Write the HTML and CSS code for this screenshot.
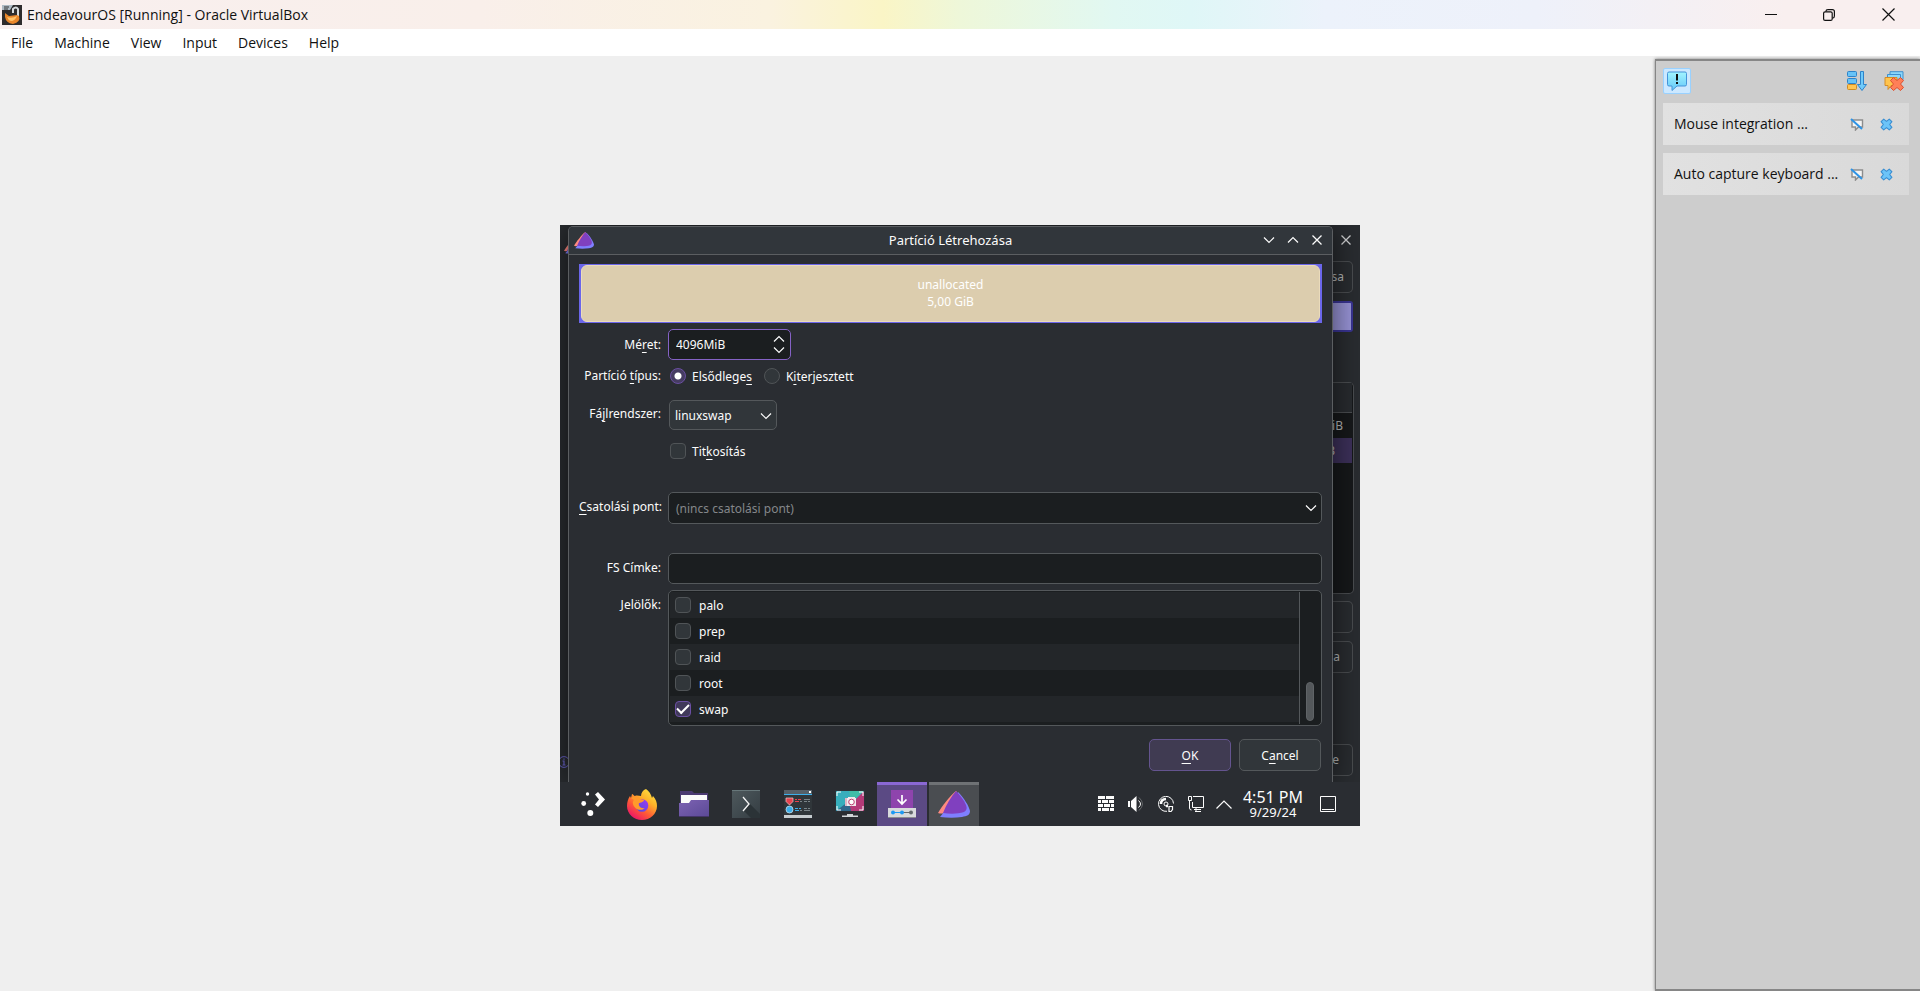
FILE: index.html
```html
<!DOCTYPE html>
<html lang="en">
<head>
<meta charset="utf-8">
<title>EndeavourOS [Running] - Oracle VirtualBox</title>
<link rel="stylesheet" href="styles.css">
</head>
<body>
<svg class="defs" aria-hidden="true">
  <symbol id="logo" viewBox="0 0 32 27">
    <path d="M18 0C12 5 4 15 0 22q3 1 6 0L19 1z" fill="#ff8a80"/>
    <path d="M20 1c6 6 11 14 12 19 0 4-3 5-8 6-7 1-14 1-22 0l4-5z" fill="#7f7fff"/>
    <path d="M18 0C13 6 8 14 5 22c7 1 15 1 21-1 3-2 3-4 2-7-2-5-6-10-10-14z" fill="#8040bf"/>
  </symbol>
  <symbol id="chev" viewBox="0 0 12 8"><path d="M1 1.500l5 5 5-5" fill="none" stroke="currentColor" stroke-width="1.200"/></symbol>
  <symbol id="cross" viewBox="0 0 12 12"><path d="M1.500 1.500l9 9m0-9l-9 9" fill="none" stroke="currentColor" stroke-width="1.300"/></symbol>
  <symbol id="hide" viewBox="0 0 14 13">
    <path d="M2 2h10.500v7H8.500l-3 3V9H2z" fill="#f4f4f4" stroke="#8d8d8d" stroke-width="1.400"/>
    <path d="M1 1l11 10" stroke="#2d93e6" stroke-width="2"/>
  </symbol>
  <symbol id="bluex" viewBox="0 0 14 14">
    <path d="M4 1.200L7 3.700l3-2.500 2.800 2.800L10.400 7l2.400 3-2.800 2.800-3-2.400-3 2.400L1.200 10l2.400-3L1.200 4z" fill="#6cc4f8" stroke="#3b8fd2" stroke-width="1.200" stroke-linejoin="round"/>
  </symbol>
</svg>

<header class="titlebar">
  <svg class="app-icon" viewBox="0 0 20 20">
    <rect width="20" height="20" fill="#2e2c2d"/><path d="M0 0h11L8 5H0z" fill="#aebac4"/><path d="M2 2h5M2 4h4" stroke="#333" stroke-width="1"/>
    <path d="M11 8V4q3-3 5 0v7" stroke="#d7dbde" stroke-width="2" fill="none"/>
    <path d="M3 8l4 3 8-1 2 1q2 6-6 8-7-1-8-7z" fill="#e9862a"/><path d="M5 12q5 2 10-1-2 5-6 5-3-1-4-4z" fill="#ffc36a"/>
  </svg>
  <h1 class="app-title">EndeavourOS [Running] - Oracle VirtualBox</h1>
  <div class="winctl">
    <button aria-label="Minimize"><svg width="12" height="12" viewBox="0 0 12 12"><path d="M0 5.500h12" stroke="#111"/></svg></button>
    <button aria-label="Restore"><svg width="12" height="12" viewBox="0 0 12 12" fill="none" stroke="#111" stroke-width="1.200"><rect x=".6" y="2.800" width="8.600" height="8.600" rx="1.500"/><path d="M2.800 2.500Q3 .6 5 .6h4.400q2 0 2 2V7q0 2-2 2.200"/></svg></button>
    <button aria-label="Close"><svg width="13" height="13" viewBox="0 0 13 13"><path d="M.5.5l12 12m0-12l-12 12" stroke="#111" stroke-width="1.200"/></svg></button>
  </div>
</header>
<nav class="menubar">
  <button>File</button><button>Machine</button><button>View</button><button>Input</button><button>Devices</button><button>Help</button>
</nav>

<main class="workspace">
  <section class="screen" aria-label="Virtual machine display">
    <div class="back-window">
      <div class="back-left">
        <svg class="back-logo"><use href="#logo"/></svg>
        <svg class="back-info" viewBox="0 0 12 12"><circle cx="6" cy="6" r="5.400" fill="none" stroke="#6862c8"/><path d="M4.500 5H6v4M4.500 9h3M6 2.500v1.200" stroke="#6862c8" stroke-width="1.200" fill="none"/></svg>
      </div>
      <div class="back-right">
        <button class="back-close" aria-label="Close"><svg width="12" height="12"><use href="#cross"/></svg></button>
        <button class="back-btn first">sa</button>
        <div class="back-bar"></div>
        <div class="back-table"><div class="bt-head"></div><div class="bt-row">iB</div><div class="bt-row on">B</div></div>
        <button class="back-btn" aria-label="Action"></button>
        <button class="back-btn second">a</button>
        <button class="back-btn third">e</button>
      </div>
    </div>

    <form class="dialog">
      <div class="dialog-title">
        <svg class="dlg-logo"><use href="#logo"/></svg>
        <h2>Partíció Létrehozása</h2>
        <div class="dlg-ctl">
          <button type="button" aria-label="Minimize"><svg width="12" height="8"><use href="#chev"/></svg></button>
          <button type="button" aria-label="Maximize"><svg class="flip" width="12" height="8"><use href="#chev"/></svg></button>
          <button type="button" aria-label="Close"><svg width="12" height="12"><use href="#cross"/></svg></button>
        </div>
      </div>
      <div class="dialog-body">
        <div class="part-frame"><div class="part"><span>unallocated</span><span>5,00 GiB</span></div></div>
        <div class="grid">
          <label class="lab" for="size">Mé<u>r</u>et:</label>
          <div class="spin"><input id="size" type="text" value="4096MiB">
            <div class="spin-btns"><button type="button" aria-label="Increase"><svg class="flip" width="12" height="8"><use href="#chev"/></svg></button><button type="button" aria-label="Decrease"><svg width="12" height="8"><use href="#chev"/></svg></button></div>
          </div>

          <span class="lab" id="ptype">Partíció <u>t</u>ípus:</span>
          <div class="radios" role="radiogroup" aria-labelledby="ptype">
            <label><input type="radio" name="type" checked><span>Elsődlege<u>s</u></span></label>
            <label><input type="radio" name="type"><span>K<u>i</u>terjesztett</span></label>
          </div>

          <label class="lab fs" for="fs">Fá<u>j</u>lrendszer:</label>
          <div class="drop small"><select id="fs"><option>linuxswap</option></select><svg width="12" height="8"><use href="#chev"/></svg></div>

          <label class="check crypt"><input type="checkbox"><span>Tit<u>k</u>osítás</span></label>

          <label class="lab up" for="mount"><u>C</u>satolási pont:</label>
          <div class="drop wide"><select id="mount"><option>(nincs csatolási pont)</option></select><svg width="12" height="8"><use href="#chev"/></svg></div>

          <label class="lab up" for="fslabel">FS Címke:</label>
          <input class="text" id="fslabel" type="text">

          <span class="lab top" id="flags">Jelölők:</span>
          <div class="list" role="group" aria-labelledby="flags">
            <div class="rows">
              <label class="check"><input type="checkbox"><span>palo</span></label>
              <label class="check"><input type="checkbox"><span>prep</span></label>
              <label class="check"><input type="checkbox"><span>raid</span></label>
              <label class="check"><input type="checkbox"><span>root</span></label>
              <label class="check"><input type="checkbox" checked><span>swap</span></label>
            </div>
            <div class="scroll"><div class="thumb"></div></div>
          </div>
        </div>
        <div class="actions"><button type="button" class="btn primary"><u>O</u>K</button><button type="button" class="btn">C<u>a</u>ncel</button></div>
      </div>
    </form>

    <footer class="taskbar">
      <button class="launcher" aria-label="Application launcher"><svg width="24" height="26" viewBox="0 0 24 26" fill="#fff"><path d="M14 3.500L17 1l7 7.500-7 7.500-3-2.500 4-5z"/><circle cx="6.500" cy="3" r="1.700"/><circle cx="2.700" cy="12.500" r="2.400"/><circle cx="9.300" cy="22" r="3"/></svg></button>
      <button class="task" aria-label="Firefox"><svg width="30" height="31" viewBox="0 0 30 31">
        <defs><linearGradient id="ff" x1="1" y1="0" x2=".3" y2="1"><stop offset="0" stop-color="#fff04a"/><stop offset=".4" stop-color="#ffb329"/><stop offset=".7" stop-color="#ff5a36"/><stop offset="1" stop-color="#ec1667"/></linearGradient>
        <linearGradient id="fg" x1="1" y1="0" x2="0" y2="1"><stop offset="0" stop-color="#a03bf0"/><stop offset="1" stop-color="#4c4ce0"/></linearGradient></defs>
        <path d="M19 0c3 2 5 5 6 9l1-2c3 3 4 7 4 10 0 8-7 14-15 14S0 25 0 17c0-4 1-7 3-10l1 2 1-4c1 0 2 2 3 2 2-1 4 0 6 0 0-3 2-6 5-7z" fill="url(#ff)"/>
        <circle cx="15" cy="16.500" r="6.300" fill="url(#fg)"/>
        <path d="M4 9c4-3 7-2 9 1l4 1c0 2-4 3-5 3-1 3 2 6 6 5-4 4-11 1-12-4-.5-2 0-3 1-4z" fill="#ff9a2b"/>
      </svg></button>
      <button class="task" aria-label="Files"><svg width="30" height="27" viewBox="0 0 30 27">
        <defs><linearGradient id="fo" x1="0" y1="0" x2="1" y2="1"><stop offset="0" stop-color="#7d62b3"/><stop offset="1" stop-color="#5b4a96"/></linearGradient></defs>
        <path d="M1 0h12l2 2h14v12H1z" fill="#4b3a72"/><path d="M2 4h26v8H2z" fill="#fbfbfb"/><path d="M0 12h10l2-3h18v17H0z" fill="url(#fo)"/><path d="M0 25.500h30" stroke="#443568"/>
      </svg></button>
      <button class="task" aria-label="Terminal"><svg width="28" height="28" viewBox="0 0 28 28">
        <defs><linearGradient id="te" x1="0" y1="0" x2="1" y2="1"><stop offset="0" stop-color="#4e595d"/><stop offset="1" stop-color="#343d42"/></linearGradient></defs>
        <rect width="28" height="28" fill="url(#te)"/><path d="M12 21l6-7 10 10v4h-9z" fill="#2b3337"/><path d="M0 .5h28" stroke="#67777a"/><path d="M11 7l6 7-6 7" fill="none" stroke="#f5f5f5" stroke-width="1.300"/>
      </svg></button>
      <button class="task" aria-label="System settings"><svg width="28" height="28" viewBox="0 0 28 28">
        <rect width="28" height="28" fill="#30363a"/><rect width="28" height="4" fill="#566068"/><rect x="25" y="1" width="2" height="2" fill="#fff"/><path d="M0 4.500h28" stroke="#3daee9"/><path d="M0 25h28v3H0z" fill="#c6cccf"/>
        <path d="M2 8h7v3.500L5.500 15 2 11.500z" fill="#e5434f" stroke="#f4c9cc" stroke-width=".7"/><circle cx="5.500" cy="19.500" r="3.500" fill="#3daee9" stroke="#d7eefa" stroke-width=".7"/>
        <path d="M11 9.500h2M14 9.500h3M11 11.500h4" stroke="#e5434f"/><path d="M20 9.500h6M20 11.500h3M24 11.500h2M20 18.500h3M24 18.500h2M20 20.500h6M16 11.500h2M16 20.500h2" stroke="#7a8488"/><path d="M11 18.500h3M15 18.500h2M11 20.500h4" stroke="#3daee9"/>
      </svg></button>
      <button class="task" aria-label="Screenshot"><svg width="32" height="28" viewBox="0 0 32 28">
        <rect x="1" width="30" height="22" fill="#2c3136"/><path d="M2 1h28v20H2z" fill="#37aebc"/><path d="M10 21L30 1v20z" fill="#b43a78"/><path d="M2 21l13-10 2 10z" fill="#30688c"/><path d="M15 1h15L17 12z" fill="#40bda8"/>
        <path d="M3 6V2h4M25 2h4v4M29 16v4h-4M7 20H3v-4" fill="none" stroke="#fff"/><path d="M11 8h3V7h7v1h1v8H11z" fill="#f1e8ec"/><circle cx="17.500" cy="12" r="2.800" fill="#fff" stroke="#bd3e73"/><path d="M12 8v8" stroke="#c9849f" stroke-width="1"/><path d="M13 24h6v1.500h5V27H8v-1.500h5z" fill="#d2d6d8"/>
      </svg></button>
      <button class="task active" aria-label="Installer"><svg width="28" height="28" viewBox="0 0 28 28">
        <path d="M3 0h22v19H3z" fill="#8e44ad"/><path d="M14 5v9M9.500 9.500L14 14l4.500-4.500" fill="none" stroke="#fff" stroke-width="1.700"/><path d="M0 18h28v10H0z" fill="#d8dadc"/><path d="M0 27.500h28" stroke="#8b8d90"/>
        <path d="M5 22.500h9" stroke="#1d99f3"/><path d="M14 22.500h9" stroke="#62686c"/><circle cx="5" cy="22.500" r="2" fill="#1d99f3"/><circle cx="14" cy="22.500" r="2" fill="#1d99f3"/><circle cx="23" cy="22.500" r="2" fill="#62686c"/>
      </svg></button>
      <button class="task open" aria-label="Partition dialog"><svg width="32" height="27"><use href="#logo"/></svg></button>

      <div class="tray">
        <button aria-label="Firewall"><svg width="16" height="16" viewBox="0 0 16 16" fill="none" stroke="#fcfcfc" stroke-width="3"><path d="M0 1.500h16" stroke-dasharray="7 1 8 1"/><path d="M0 5.500h16" stroke-dasharray="3 1 6 1 5 1"/><path d="M0 9.500h16" stroke-dasharray="5 1 6 1 3 1"/><path d="M0 13.500h16" stroke-dasharray="3 1 7 1 4 1"/></svg></button>
        <button aria-label="Volume"><svg width="16" height="16" viewBox="0 0 16 16"><path d="M0 5h2v6H0zM3 5l5.500-5v16L3 11z" fill="#fcfcfc"/><path d="M10.500 4.500q4 3.500 0 7" fill="none" stroke="#fcfcfc"/><path d="M11 1.500q7 6.500 0 13" fill="none" stroke="#64676a"/></svg></button>
        <button aria-label="Disk"><svg width="16" height="16" viewBox="0 0 16 16" fill="none" stroke="#fcfcfc"><path d="M15.500 7.500A7.500 7.500 0 1 0 9 15.300"/><circle cx="8" cy="8" r="2"/><path d="M3 8q0-5 5-5M8 10h2" stroke-width="2.500"/><path d="M11 10.500h3.500v3l-1.500 2h-2z" stroke-width="1.200"/></svg></button>
        <button aria-label="Network"><svg width="16" height="16" viewBox="0 0 16 16" fill="none" stroke="#fcfcfc"><path d="M5 .5h10.500v11H4.500V6"/><path d="M.5.5h3v4h-3zM1.500 5v7q0 2 2 2M6 13.500h7M7 15.500h6M8 12v3" /></svg></button>
        <button class="caret" aria-label="Show hidden icons"><svg width="16" height="9" viewBox="0 0 16 9"><path d="M.5 8.500L8 1l7.500 7.500" fill="none" stroke="#fcfcfc" stroke-width="1.200"/></svg></button>
        <div class="clock"><time class="time">4:51 PM</time><time class="date">9/29/24</time></div>
        <button class="desk" aria-label="Show desktop"><svg width="16" height="16" viewBox="0 0 16 16" fill="none" stroke="#fcfcfc"><path d="M.5.5h15v15H.5zM2 13.500h12"/></svg></button>
      </div>
    </footer>
  </section>

  <aside class="notes" aria-label="Notifications">
    <div class="notes-head">
      <button class="toggle" aria-label="Toggle notifications"><svg width="20" height="20" viewBox="0 0 20 20"><defs><linearGradient id="bb" x1="0" y1="0" x2="0" y2="1"><stop offset="0" stop-color="#a2f4ff"/><stop offset="1" stop-color="#63c7f8"/></linearGradient></defs><path d="M2 1h16q1.500 0 1.500 1.500v11q0 1.500-1.500 1.500h-8l-5 4.500V15H2Q.5 15 .5 13.500v-11Q.5 1 2 1z" fill="url(#bb)" stroke="#4593d8"/><path d="M10 3v6.500M10 11v2" stroke="#111" stroke-width="2"/></svg></button>
      <button class="sort" aria-label="Sort"><svg width="20" height="20" viewBox="0 0 20 20"><rect x=".5" y=".5" width="9" height="5" rx="1" fill="#67c3f7" stroke="#2e83c9"/><rect x=".5" y="7.500" width="9" height="5" rx="1" fill="#67c3f7" stroke="#2e83c9"/><rect x=".5" y="13.500" width="9" height="5" rx="1" fill="#ffc552" stroke="#cf8b22"/><path d="M13.500.5h3v13h3l-4.500 6-4.500-6h3z" fill="#6fcbfb" stroke="#2e83c9"/></svg></button>
      <button aria-label="Close all"><svg width="20" height="20" viewBox="0 0 20 20"><path d="M6 .7h13v8H6z" fill="#8bd7fa" stroke="#3f8fcd"/><path d="M3.500 3.500h13v8h-13z" fill="#8bd7fa" stroke="#3f8fcd"/><path d="M1 6.500h12v8H7l-3 4v-4H1z" fill="#ffc44c" stroke="#d68c24"/><path d="M9.500 6.500l3.500 3 3.500-3 3 3-3 3.500 3 3.500-3 3-3.500-3-3.500 3-3-3 3-3.500-3-3.500z" fill="#ff7f58" stroke="#dc4f30" stroke-linejoin="round"/></svg></button>
    </div>
    <div class="note"><span>Mouse integration ...</span><button aria-label="Do not show again"><svg width="14" height="13"><use href="#hide"/></svg></button><button aria-label="Dismiss"><svg width="13" height="13"><use href="#bluex"/></svg></button></div>
    <div class="note"><span>Auto capture keyboard ...</span><button aria-label="Do not show again"><svg width="14" height="13"><use href="#hide"/></svg></button><button aria-label="Dismiss"><svg width="13" height="13"><use href="#bluex"/></svg></button></div>
  </aside>
</main>
</body>
</html>
```
FILE: styles.css
```css
* { box-sizing: border-box; }
body {
  margin: 0;
  min-height: 100vh;
  display: flex;
  flex-direction: column;
  background: #efefef;
  color: #111;
  font: 14px/20px "Open Sans", "Noto Sans", sans-serif;
}
.defs { display: none; }
button { margin: 0; padding: 0; border: 0; background: none; color: inherit; font: inherit; }
svg { display: block; flex: none; }
.flip { transform: rotate(180deg); }

/* Host window */
.titlebar {
  height: 29px;
  display: flex;
  align-items: center;
  gap: 5px;
  padding-left: 2px;
  background: linear-gradient(90deg, #f8efef 0%, #f9efea 25%, #faf2e0 40%, #faf5c6 46%, #eef7d9 50%, #e1f8f2 58%, #dff7f7 62%, #ecf2fb 69%, #eef1fa 80%, #f9efef 93%);
}
.app-icon { width: 20px; height: 20px; }
.app-title { margin: 0; font-size: 14px; font-weight: 400; flex: 1; }
.winctl { display: flex; padding-right: 2px; }
.winctl button { width: 58px; height: 28px; display: grid; place-items: center; }
.winctl button:last-child { width: 60px; }
.menubar { height: 27px; display: flex; align-items: center; gap: 21px; padding-left: 11px; background: #fff; }

.workspace { flex: 1; display: grid; grid-template-columns: 1fr 800px 1fr; }
.screen { grid-column: 2; position: relative; align-self: center; height: 601px; margin-top: 4px; background: #26292d; color: #fcfcfc; font: 12px/18px "Noto Sans", sans-serif; overflow: hidden; }

/* Window behind the dialog */
.back-window { position: absolute; inset: 0 0 44px; display: flex; justify-content: space-between; background: #292c30; color: #b5b7b8; }
.back-left { width: 8px; overflow: hidden; padding: 12px 0 5px; display: flex; flex-direction: column; justify-content: space-between; }
.back-logo { width: 20px; height: 17px; margin-left: 4px; }
.back-info { width: 12px; height: 12px; margin-left: -2px; margin-bottom: 9px; }
.back-right { width: 36px; padding: 9px 7px 0 0; display: flex; flex-direction: column; }
.back-close { align-self: flex-end; height: 12px; margin-right: 1px; color: #d0d1d2; }
.back-btn { display: block; height: 32px; border: 1px solid #4a4d50; border-left: 0; border-radius: 0 5px 5px 0; padding-right: 8px; text-align: right; }
.back-btn.first { margin-top: 15px; margin-bottom: 8px; }
.back-bar { height: 31px; border: 2px solid #3a3594; border-left: 0; border-radius: 0 3px 3px 0; background: #9793d5; }
.back-table { height: 212px; margin: 50px -1px 7px 0; border: 1px solid #4a4d50; border-left: 0; border-radius: 0 5px 5px 0; background: #16181a; }
.bt-head { height: 30px; margin-right: 1px; border-bottom: 1px solid #4a4d50; background: #282b2f; }
.bt-row { height: 25px; margin-right: 1px; padding-right: 9px; text-align: right; line-height: 25px; }
.bt-row.on { background: #3c3059; padding-right: 17px; }
.back-btn.second { margin-top: 8px; padding-right: 12px; }
.back-btn.third { margin-top: 71px; padding-right: 13px; }

/* Partition dialog */
.dialog { position: absolute; left: 8px; right: 27px; top: 1px; bottom: 44px; background: #2a2d32; border: 1px solid #5b5e61; border-bottom: 0; border-radius: 5px 5px 0 0; box-shadow: 0 0 30px rgba(0, 0, 0, .6); }
.dialog-title { height: 28px; display: grid; grid-template-columns: 100px 1fr 96px; align-items: center; background: #31363b; border-bottom: 1px solid #5b5e61; border-radius: 4px 4px 0 0; padding: 0 9px 1px 5px; }
.dialog-title h2 { margin: 0; font-size: 13px; font-weight: 400; text-align: center; }
.dlg-logo { width: 20px; height: 17px; }
.dlg-ctl { display: flex; justify-content: flex-end; align-items: center; gap: 12px; }
.dialog-body { padding: 9px 10px; }
.part-frame { height: 59px; background: #6b66ea; padding: 1px 2px; }
.part { height: 57px; display: flex; flex-direction: column; justify-content: center; align-items: center; padding-bottom: 2px; border: 1px solid #eadbbb; border-radius: 6px; background: #dccdae; color: #fff; line-height: 17px; }
u { text-decoration: underline; text-underline-offset: 3px; text-decoration-skip-ink: none; }
.grid { display: grid; grid-template-columns: 82px 1fr; column-gap: 7px; margin-top: 6px; align-items: center; }
.lab { text-align: right; white-space: nowrap; }
.lab.up { align-self: start; padding-top: 6px; }
.lab.fs { align-self: start; padding-top: 13px; }
.lab.top { align-self: start; padding-top: 12px; }

.spin { width: 123px; height: 31px; display: flex; align-items: center; justify-content: space-between; padding: 0 5px 0 7px; border: 1px solid #8562c6; border-radius: 5px; background: #1b1e20; }
.spin input { width: 80px; padding: 0; border: 0; outline: 0; background: none; color: inherit; font: inherit; }
.spin-btns { display: grid; gap: 3px; }
.radios { display: flex; gap: 12px; height: 32px; align-items: center; padding-left: 2px; }
.radios label, .check { display: flex; align-items: center; gap: 6px; white-space: nowrap; }
.radios span, .check span { padding-top: 1px; }
input[type="radio"], input[type="checkbox"] { appearance: none; flex: none; width: 16px; height: 16px; margin: 0; border: 1px solid #505457; background: #31363a; }
input[type="radio"] { border-radius: 50%; }
input[type="checkbox"] { border-radius: 4px; }
input[type="radio"]:checked { border-color: #6b4fa3; background: radial-gradient(circle, #fff 3px, #463c62 4px); }
input[type="checkbox"]:checked { display: grid; place-items: center; border-color: #6b4fa3; background: #40395a; }
input[type="checkbox"]:checked::after { content: ""; width: 10px; height: 5px; margin-bottom: 3px; border: solid #fff; border-width: 0 0 2px 2px; transform: rotate(-45deg); }

.drop { position: relative; height: 32px; }
.drop select { appearance: none; width: 100%; height: 100%; margin: 0; padding: 1px 24px 0 7px; border: 1px solid #54585b; border-radius: 5px; color: inherit; font: inherit; }
.drop svg { position: absolute; right: 5px; top: 12px; pointer-events: none; }
.drop.small { width: 108px; height: 30px; margin: 8px 0 0 1px; }
.drop.small select { padding-left: 5px; background: #31363a; }
.drop.wide select { background: #1b1e20; color: #84878a; }
.check.crypt { grid-column: 2; height: 20px; padding-left: 2px; margin: 11px 0 31px; }
.text { height: 31px; margin: 0; padding: 0 6px; border: 1px solid #54585b; border-radius: 5px; background: #1b1e20; color: inherit; font: inherit; }
.grid .drop.wide { margin-bottom: 29px; }
.list { height: 136px; margin-top: 6px; display: flex; padding: 1px; border: 1px solid #54585b; border-radius: 5px; background: #1b1e20; }
.rows { flex: 1; }
.rows .check { height: 26px; padding-left: 5px; gap: 8px; }
.rows .check:nth-child(odd) { background: #232629; }
.scroll { width: 21px; border-left: 1px solid #54585b; display: flex; justify-content: center; align-items: flex-end; padding-bottom: 3px; }
.thumb { width: 8px; height: 39px; border-radius: 4px; background: #54585b; border: 1px solid #606467; }
.actions { display: flex; justify-content: flex-end; gap: 8px; margin-top: 13px; padding-right: 1px; }
.btn { width: 82px; height: 32px; padding-top: 1px; border: 1px solid #54585b; border-radius: 5px; background: #31363a; }
.btn.primary { border-color: #64548f; background: #403b52; }

/* Guest panel */
.taskbar { position: absolute; left: 0; right: 0; bottom: 0; height: 44px; display: flex; gap: 2px; padding: 0 24px 0 11px; background: #2a2d32; }
.taskbar button { display: grid; place-items: center; }
.launcher { width: 44px; }
.task { width: 50px; }
.taskbar .active { background: #5b4a84; box-shadow: inset 0 3px #8a68d4; }
.taskbar .open { background: #4a4d51; box-shadow: inset 0 3px #6f7275; }
.tray { margin-left: auto; display: flex; align-items: center; gap: 14px; }
.caret { margin-right: -3px; margin-left: -2px; }
.clock { display: flex; flex-direction: column; align-items: center; width: 60px; white-space: nowrap; }
.time { font-size: 16px; line-height: 16px; }
.date { font-size: 13px; line-height: 14px; }
.desk { margin-left: 3px; }

/* Notification centre */
.notes { grid-column: 3; justify-self: end; width: 265px; margin-top: 3px; padding: 7px 11px 0 7px; background: #cdcdcd; border: solid #868686; border-width: 2px 0 2px 1px; box-shadow: 0 0 3px #777; }
.notes-head { display: flex; align-items: center; gap: 17px; padding-right: 5px; margin-bottom: 9px; }
.toggle { width: 28px; height: 26px; display: grid; place-items: center; border: 1px solid #99d1ff; border-radius: 2px; background: #cce8ff; }
.sort { margin-left: auto; }
.note { height: 42px; margin-bottom: 8px; display: flex; align-items: center; gap: 16px; padding: 0 16px 0 11px; background: linear-gradient(90deg, #e1e1e1, #d9d9d9); }
.note span { flex: 1; min-width: 0; white-space: nowrap; }
```
